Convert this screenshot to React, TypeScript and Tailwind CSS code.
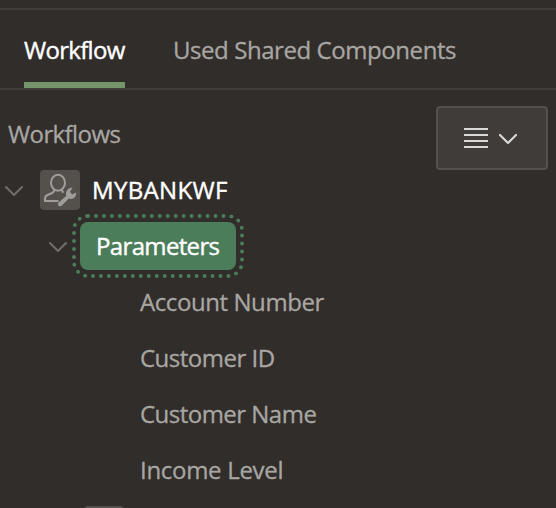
import type { ReactNode } from "react";

function Chevron({ className }: { className: string }) {
  return (
    <svg width="20" height="12" viewBox="0 0 20 12" fill="none" className={`shrink-0 ${className}`}>
      <path d="M2 2 L10 10 L18 2" stroke="currentColor" strokeWidth="2.2" strokeLinecap="round" strokeLinejoin="round" />
    </svg>
  );
}

function UserWrench() {
  return (
    <svg width="40" height="40" viewBox="0 0 40 40" fill="none" className="shrink-0 rounded bg-[#54504c] text-[#a09e9b]">
      <ellipse cx="18" cy="12.8" rx="7" ry="8" stroke="currentColor" strokeWidth="2" />
      <path
        d="M14 19.5 C14.3 21.4 13.6 22.4 12.2 23 L7.5 25 C5.7 25.8 5 27 5 28.8 L5 31 L18.5 31 M22 19.5 C22 21 22.4 21.8 23.4 22.6"
        stroke="currentColor"
        strokeWidth="2"
      />
      <path
        d="M18.6 32.4 L26.2 26 C25 21.6 28.2 17.6 32.6 17.6 L30 21.8 L32.2 24.4 L36.2 22.4 C36.4 27 32.8 29.8 28.8 28.6 L21.8 35.6 C18.9 37.4 16.8 34.6 18.6 32.4 Z"
        fill="currentColor"
      />
    </svg>
  );
}

function Row({ children, className = "" }: { children: ReactNode; className?: string }) {
  return <div className={`flex h-14 shrink-0 items-center ${className}`}>{children}</div>;
}

const parameters = [
  { name: "Account Number", tracking: "tracking-[-0.42px]" },
  { name: "Customer ID", tracking: "tracking-[-0.5px]" },
  { name: "Customer Name", tracking: "tracking-[-0.52px]" },
  { name: "Income Level", tracking: "tracking-[-0.3px]" },
];

export default function App() {
  return (
    <div className="flex h-[508px] w-[556px] flex-col overflow-hidden whitespace-nowrap bg-[#312d2a] font-['Open_Sans','Noto_Sans',sans-serif] text-2xl leading-8 text-[#a8a6a3] [-webkit-text-stroke:0.3px_currentColor]">
      <div className="mt-2 flex h-[82px] shrink-0 gap-12 border-y-2 border-[#403c39] pl-6">
        <div className="flex w-[101px] flex-col justify-between pt-6 text-white [-webkit-text-stroke:0.4px_currentColor]">
          <span className="tracking-[-0.7px]">Workflow</span>
          <span className="h-1.5 bg-[#759469]" />
        </div>
        <div className="pt-6 tracking-[-0.43px]">Used Shared Components</div>
      </div>
      <div className="flex h-[72px] shrink-0 justify-between px-2">
        <span className="pt-7 tracking-[-0.6px]">Workflows</span>
        <button className="mt-4 flex h-16 w-28 items-center rounded border-2 border-[#54504c] bg-[#403c39] pl-[26px] text-[#d9d8d6]">
          <svg width="24" height="20" viewBox="0 0 24 20" fill="currentColor">
            <path d="M0 0h24v2H0zM0 6h24v2H0zM0 12h24v2H0zM0 18h24v2H0z" />
          </svg>
          <Chevron className="ml-2.5 mt-0.5" />
        </button>
      </div>
      <Row className="pl-1 text-white">
        <Chevron className="mt-0.5 text-[#6f6c69]" />
        <span className="ml-4 flex">
          <UserWrench />
        </span>
        <span className="ml-3 tracking-[0.35px] [-webkit-text-stroke:0.4px_currentColor]">MYBANKWF</span>
      </Row>
      <Row className="pl-12">
        <Chevron className="mt-0.5 text-[#6f6c69]" />
        <span className="ml-3 flex h-12 w-[156px] items-center rounded-lg bg-[#4c7d5b] pl-4 tracking-[-0.65px] text-white outline-4 outline-offset-4 outline-dotted outline-[#4c7d5b] [-webkit-text-stroke:0.4px_currentColor]">
          Parameters
        </span>
      </Row>
      {parameters.map((p) => (
        <Row key={p.name} className="pl-[140px]">
          <span className={p.tracking}>{p.name}</span>
        </Row>
      ))}
      <div className="ml-[84px] mt-2 h-10 w-10 shrink-0 rounded bg-[#54504c]" />
    </div>
  );
}
